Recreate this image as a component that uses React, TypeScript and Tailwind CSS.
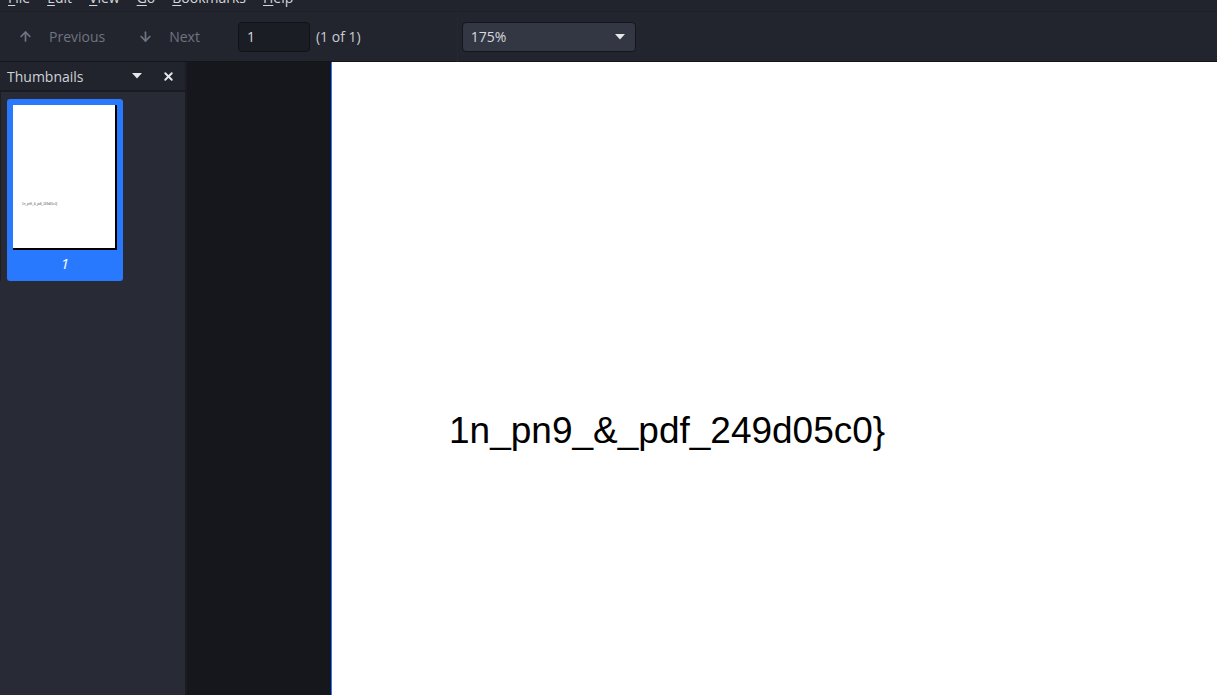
import { ArrowUp, ArrowDown, X } from "lucide-react";

const menu = ["File", "Edit", "View", "Go", "Bookmarks", "Help"];

function Caret({ className = "" }: { className?: string }) {
  return (
    <svg width="10" height="6" viewBox="0 0 10 6" className={className} aria-hidden>
      <path d="M0 0 L10 0 L5 5.5 Z" fill="currentColor" />
    </svg>
  );
}

export default function App() {
  return (
    <div className="flex h-[695px] w-[1217px] flex-col overflow-hidden bg-[#23252e] font-['Open_Sans',sans-serif] text-[#c9ccd3]">
      {/* Menu bar — cut off at the top of the window */}
      <div className="relative h-3 shrink-0 overflow-hidden border-b border-[#1f2128] bg-[#22242d]">
        <div className="flex gap-[17px] pl-2 text-[14px] leading-none -mt-[9px] text-[#d4d6dc]">
          {menu.map((m) => (
            <span key={m}>
              <span className="underline underline-offset-[2px]">{m[0]}</span>
              {m.slice(1)}
            </span>
          ))}
        </div>
      </div>

      {/* Toolbar */}
      <div className="flex h-[50px] shrink-0 items-center border-b border-[#14151a] bg-[#23252e] text-[14px]">
        <div className="flex items-center pl-[18px] text-[#6e7481]">
          <ArrowUp className="size-[15px]" strokeWidth={2.75} />
          <span className="ml-[16px]">Previous</span>
          <ArrowDown className="ml-[33px] size-[15px]" strokeWidth={2.75} />
          <span className="ml-[16px]">Next</span>
        </div>
        <div className="ml-[38px] flex h-[30px] w-[72px] items-center rounded-[4px] border border-[#111217] bg-[#1b1d24] pl-[8px] text-[#d6d9df]">
          1
        </div>
        <span className="ml-[6px] text-[#c9ccd3]">(1 of 1)</span>
        <div className="ml-[96px] mr-[4px] h-[50px] w-px bg-[#262831]" />
        <div className="flex h-[30px] w-[174px] items-center justify-between rounded-[4px] border border-[#15161b] bg-[#333643] pl-[8px] pr-[10px] text-[#d6d9df]">
          <span>175%</span>
          <Caret className="text-[#e6e7ea]" />
        </div>
      </div>

      <div className="flex min-h-0 flex-1">
        {/* Sidebar */}
        <div className="flex w-[187px] shrink-0 flex-col border-r-2 border-[#1b1c22] bg-[#282a36]">
          <div className="flex h-[30px] shrink-0 items-center justify-between border-b-2 border-[#1a1b21] bg-[#22242d] pl-[7px] pr-[10px] text-[14px] text-[#cfd2d8]">
            <span>Thumbnails</span>
            <div className="flex items-center gap-[20px]">
              <Caret className="text-[#e6e7ea]" />
              <X className="size-[13px] text-[#e6e7ea]" strokeWidth={3.5} />
            </div>
          </div>
          <div className="border-l border-[#1d1e24] pl-[6px] pt-[7px]">
            <div className="flex w-[116px] flex-col items-center rounded-[3px] bg-[#2979ff] pb-[10px] pt-[6px]">
              <div className="h-[145px] w-[104px] bg-black">
                <div className="flex h-[143px] w-[102px] flex-col bg-white pl-[9px] pt-[98px]">
                  <span className="whitespace-nowrap font-['Liberation_Sans',sans-serif] text-[3px] leading-none text-[#555]">
                    1n_pn9_&amp;_pdf_249d05c0&#125;
                  </span>
                </div>
              </div>
              <span className="mt-[6px] text-[15px] italic leading-none text-white">1</span>
            </div>
          </div>
        </div>

        {/* Viewer background */}
        <div className="w-[145px] shrink-0 border-r border-[#2979ff] bg-[#16171c]" />

        {/* Page */}
        <div className="flex-1 bg-white pl-[117px] pt-[350px]">
          <span className="whitespace-nowrap font-['Liberation_Sans',sans-serif] text-[37px] leading-none text-black">
            1n_pn9_&amp;_pdf_249d05c0&#125;
          </span>
        </div>
      </div>
    </div>
  );
}
